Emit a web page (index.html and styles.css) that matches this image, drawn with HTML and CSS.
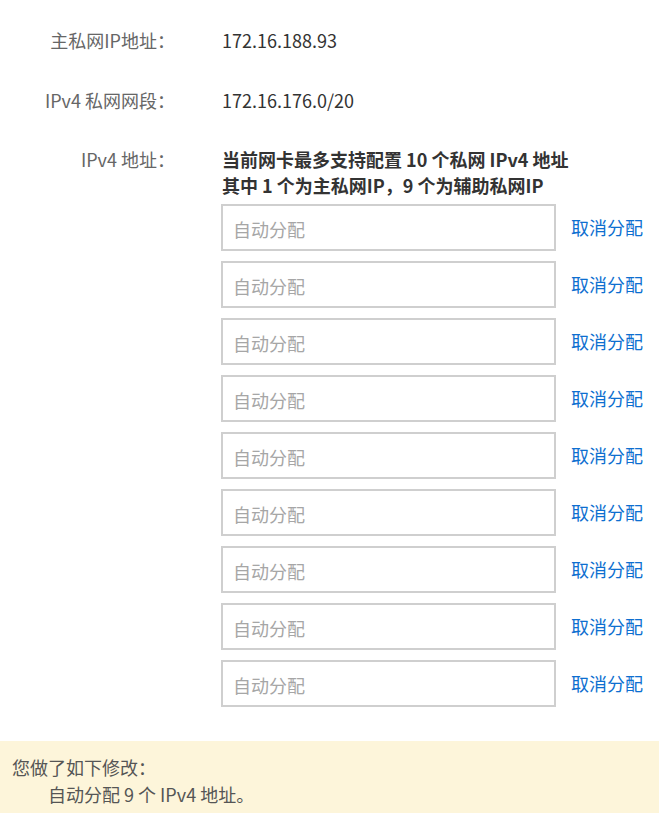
FILE: index.html
```html
<!DOCTYPE html>
<html lang="zh-CN">
<head>
<meta charset="utf-8">
<link rel="stylesheet" href="styles.css">
</head>
<body>
<div class="form">
  <div class="row row-first">
    <div class="label">主私网IP地址：</div>
    <div class="value">172.16.188.93</div>
  </div>
  <div class="row row-second">
    <div class="label">IPv4 私网网段：</div>
    <div class="value">172.16.176.0/20</div>
  </div>
  <div class="row row-third">
    <div class="label">IPv4 地址：</div>
    <div class="value">
      <div class="tip">当前网卡最多支持配置 10 个私网 IPv4 地址<br>其中 1 个为主私网IP，9 个为辅助私网IP</div>
      <div class="ip-list">
        <div class="ip-item"><input class="ip-input" placeholder="自动分配"><a class="ip-cancel">取消分配</a></div>
        <div class="ip-item"><input class="ip-input" placeholder="自动分配"><a class="ip-cancel">取消分配</a></div>
        <div class="ip-item"><input class="ip-input" placeholder="自动分配"><a class="ip-cancel">取消分配</a></div>
        <div class="ip-item"><input class="ip-input" placeholder="自动分配"><a class="ip-cancel">取消分配</a></div>
        <div class="ip-item"><input class="ip-input" placeholder="自动分配"><a class="ip-cancel">取消分配</a></div>
        <div class="ip-item"><input class="ip-input" placeholder="自动分配"><a class="ip-cancel">取消分配</a></div>
        <div class="ip-item"><input class="ip-input" placeholder="自动分配"><a class="ip-cancel">取消分配</a></div>
        <div class="ip-item"><input class="ip-input" placeholder="自动分配"><a class="ip-cancel">取消分配</a></div>
        <div class="ip-item"><input class="ip-input" placeholder="自动分配"><a class="ip-cancel">取消分配</a></div>
      </div>
    </div>
  </div>
</div>
<div class="notice">
  <div class="notice-title">您做了如下修改：</div>
  <div class="notice-item">自动分配 9 个 IPv4 地址。</div>
</div>
</body>
</html>
```

FILE: styles.css
```css
* { box-sizing: border-box; }
html, body { margin: 0; padding: 0; background: #fff; }
body {
  font-family: "Noto Sans CJK SC", sans-serif;
  font-size: 18px;
  color: #333;
  width: 659px;
  height: 813px;
  overflow: hidden;
}
.form { padding-top: 28px; }
.row {
  display: grid;
  grid-template-columns: 175px 1fr;
  column-gap: 47px;
  line-height: 24px;
}
.row-second { margin-top: 36px; }
.row-third { margin-top: 34px; line-height: 26px; }
.label { text-align: right; color: #666; }
.value { color: #333; }
.tip { font-weight: bold; color: #333; }
.ip-list {
  margin-top: 6px;
  display: flex;
  flex-direction: column;
  gap: 10px;
}
.ip-item { display: flex; align-items: center; }
.ip-input {
  width: 335px;
  height: 47px;
  margin: 0 0 0 -1px;
  border: 2px solid #cfcfcf;
  padding: 2px 10px 0;
  font: inherit;
  font-size: 18px;
  color: #333;
  outline: none;
  background: #fff;
}
.ip-input::placeholder { color: #a6a6a6; }
.ip-cancel {
  margin-left: 15px;
  color: #0d6fd0;
  font-size: 18px;
  margin-top: -2px;
  cursor: pointer;
}
.notice {
  margin-top: 34px;
  background: #fdf5da;
  padding: 13px 12px 10px;
  line-height: 27px;
  color: #555;
}
.notice-item { padding-left: 36px; }
```
